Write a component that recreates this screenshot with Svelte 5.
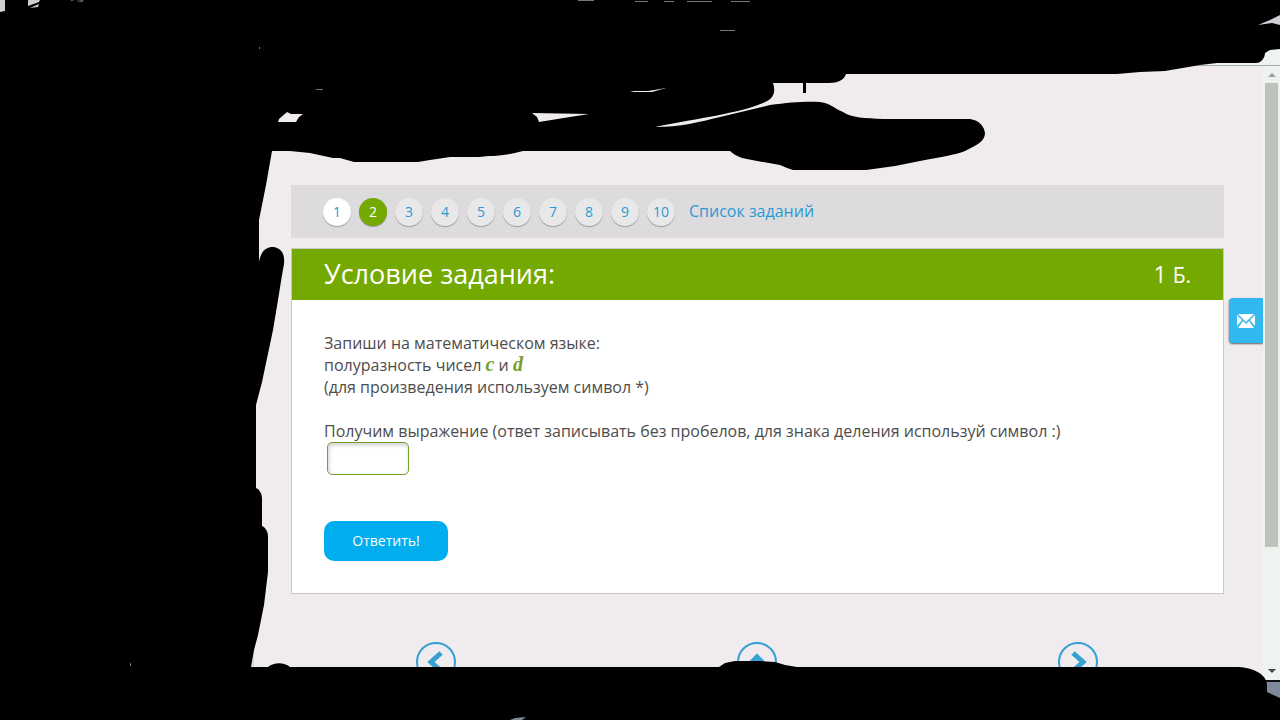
<script>
  const tasks = Array.from({ length: 10 }, (_, i) => i + 1);
  const current = 2;

  let answer = $state('');

  function submit(event) {
    event.preventDefault();
  }
</script>

<div class="window">
  <div class="toolbar"></div>

  <div class="viewport">
    <div class="page">
      <div class="sidebar"></div>

      <main>
        <nav class="tasks">
          {#each tasks as task (task)}
            <a
              href="#task-{task}"
              class="num"
              class:done={task < current}
              class:active={task === current}
            >{task}</a>
          {/each}
          <a href="#list" class="list">Список заданий</a>
        </nav>

        <section class="card">
          <header>
            <h1>Условие задания:</h1>
            <div class="points">1 <span>Б.</span></div>
          </header>

          <form onsubmit={submit}>
            <p>
              Запиши на математическом языке:<br />
              полуразность чисел <i>c</i> и <i>d</i><br />
              (для произведения используем символ *)
            </p>
            <label for="answer">
              Получим выражение (ответ записывать без пробелов, для знака деления используй символ :)
            </label>
            <input id="answer" type="text" autocomplete="off" bind:value={answer} />
            <button type="submit">Ответить!</button>
          </form>
        </section>

        <nav class="pager">
          <a href="#prev" aria-label="Назад">
            <svg viewBox="0 0 40 40">
              <circle cx="20" cy="20" r="19" />
              <path d="M25 11 L15 20 L25 29" />
            </svg>
          </a>
          <a href="#top" aria-label="Наверх">
            <svg viewBox="0 0 40 40">
              <circle cx="20" cy="20" r="19" />
              <path d="M11 24 L20 15 L29 24" />
            </svg>
          </a>
          <a href="#next" aria-label="Вперёд">
            <svg viewBox="0 0 40 40">
              <circle cx="20" cy="20" r="19" />
              <path d="M15 11 L25 20 L15 29" />
            </svg>
          </a>
        </nav>
      </main>

      <button class="feedback" type="button" aria-label="Написать нам">
        <svg viewBox="0 0 18 14">
          <path d="M1 0 H17 L9 8 Z M0 1 L5 6 L0 12 Z M18 1 L13 6 L18 12 Z M1 14 L6 7 L9 10 L12 7 L17 14 Z" />
        </svg>
      </button>
    </div>

    <div class="scrollbar">
      <svg class="up" viewBox="0 0 8 4"><path d="M0 4 L4 0 L8 4 Z" /></svg>
      <div class="track"><div class="thumb"></div></div>
      <svg class="down" viewBox="0 0 8 4"><path d="M0 0 H8 L4 4 Z" /></svg>
    </div>
  </div>

  <div class="taskbar"></div>

  <!-- black marker strokes, gaps between them cut out with evenodd -->
  <svg class="marker" viewBox="0 0 1280 720" preserveAspectRatio="none" aria-hidden="true">
    <path
      fill-rule="evenodd"
      d="M0 0 H1280 V49 L1270 50 L1265 53 C1265 58 1261 63 1256 63 H1217 L1200 65 L1165 71 L1140 72
        L1117 74 H846 C844 80 838 83 829 83 H806 V93 H803 V83 H773 C776 92 774 99 763 103
        C740 113 700 118 655 127 C680 127 700 122 720 117 L770 105 C790 102 808 101 820 102
        C832 104 833 108 843 112 C852 118 864 118 884 119 H970 C979 120 985 127 985 134
        C984 143 974 146 965 151 C955 155 940 157 925 160 L895 166 L866 170 H793 L787 168
        L780 165 L757 161 L742 158 C737 156 733 154 730 151 H523 C500 157 492 155 478 157
        H450 L430 160 L418 162 H354 L340 158 L333 158 L310 153 L290 151 H272
        L266 185 L262 205 L259 220 V262 C261 251 266 247 273 247 C281 248 285 253 284 264
        L282 275 L278 300 L273 330 L262 382 L256 405 V488 C260 490 262 494 262 499 V526
        C266 528 268 532 268 537 V572 L264 605 L258 635 L254 650 L251 667 H268
        C274 662 284 662 290 667 H719 L725 663 L735 661 H760 L775 662 L785 665 L797 667
        H1236 C1252 667 1267 674 1267 685 V692 L1280 698 V720 H0 Z
        M0 0 H5 V11 L0 12 Z
        M28 0 H40 L39 2 L28 6 Z M30 8 L39 4 L38 7 Z
        M278 122 L279 119 L287 112 L291 114 H303 L299 117 L296 122 Z
        M532 113 L589 114 L570 117 L539 122 L537 117 Z
        M630 91 H648 L666 88 L652 92 L634 92 Z
        M1258 25 L1270 20 L1280 15 V25 L1272 23 Z
        M510 720 L515 718 L526 717 L522 720 Z"
    />
    <path
      class="specks"
      d="M70 0 L74 0 L72 1 Z M76 1 L84 0 L82 2 Z
        M578 0 H594 V1 H578 Z M635 1 H648 V2 H635 Z M664 1 H674 V2 H664 Z
        M687 1 H712 V2 H687 Z M731 1 H750 V2 H731 Z
        M720 30 H735 V31 H720 Z M316 89 H323 V90 H316 Z
        M259 47 H260 V49 H259 Z M130 666 V664 L131 662 V666 Z"
    />
  </svg>
</div>

<style>
  :global(body) {
    margin: 0;
    font-family: 'Open Sans', sans-serif;
    color: #4d4d4d;
  }

  .window {
    position: relative;
    display: flex;
    flex-direction: column;
    height: 100vh;
    overflow: hidden;
  }

  .toolbar {
    flex: none;
    height: 65px;
    background: linear-gradient(#cfcfd3 30px, #f0f4f1 30px);
    border-bottom: 1px solid #a9adaa;
  }

  .viewport {
    flex: 1;
    display: flex;
    min-height: 0;
  }

  .page {
    position: relative;
    flex: 1;
    display: flex;
    overflow: hidden;
    background: #efebee;
  }

  .sidebar {
    flex: none;
    width: 251px;
    background: #f4f2f4;
    border-right: 3px solid #dcdadc;
  }

  main {
    flex: 1;
    padding: 119px 39px 0 37px;
  }

  a {
    color: #2a9ad6;
    text-decoration: none;
  }

  .tasks {
    display: flex;
    align-items: center;
    gap: 8px;
    height: 53px;
    padding: 0 32px;
    background: #dddbde;
  }

  .num {
    width: 28px;
    height: 28px;
    border-radius: 50%;
    background: #e8e8e8;
    box-shadow: 0 1px 1px rgba(0, 0, 0, 0.3);
    font-size: 14px;
    line-height: 28px;
    text-align: center;
  }

  .done {
    background: #fff;
  }

  .active {
    background: #73a900;
    color: #fff;
  }

  .list {
    margin-left: 6px;
    padding-bottom: 2px;
    font-size: 16px;
    line-height: 22px;
  }

  .card {
    margin-top: 10px;
    border: 1px solid #c8c8cb;
    background: #fff;
  }

  header {
    display: flex;
    align-items: center;
    justify-content: space-between;
    box-sizing: border-box;
    height: 51px;
    padding: 0 32px 2px;
    background: #73a900;
    color: #fff;
  }

  h1 {
    margin: 0;
    font-size: 27px;
    font-weight: 400;
  }

  .points {
    font-size: 23px;
  }

  .points span {
    font-size: 21px;
  }

  form {
    padding: 32px;
    font-size: 16px;
    line-height: 22px;
  }

  p {
    margin: 0 0 22px;
  }

  i {
    font-family: 'Liberation Serif', serif;
    font-size: 20px;
    font-weight: 700;
    line-height: 20px;
    color: #73a02c;
  }

  label {
    display: block;
  }

  input {
    display: block;
    box-sizing: border-box;
    width: 82px;
    height: 33px;
    margin: 0 3px 46px;
    padding: 0 8px;
    border: 1px solid #73a02c;
    border-radius: 5px;
    background: #fff;
    box-shadow: inset 1px 2px 4px rgba(0, 0, 0, 0.2);
    font: inherit;
  }

  form button {
    display: block;
    width: 124px;
    height: 40px;
    padding: 0 0 2px;
    border: 0;
    border-radius: 10px;
    background: #00aeef;
    color: #fff;
    font-family: inherit;
    font-size: 14px;
  }

  .pager {
    display: grid;
    grid-template-columns: repeat(3, 1fr);
    justify-items: center;
    margin: 48px -14px 0 -16px;
  }

  .pager a,
  .pager svg {
    display: block;
    width: 40px;
    height: 40px;
  }

  .pager svg {
    fill: none;
    stroke: #35a0d2;
  }

  .pager circle {
    stroke-width: 2;
  }

  .pager path {
    stroke-width: 5;
  }

  .feedback {
    position: absolute;
    top: 232px;
    right: 0;
    display: grid;
    place-items: center;
    width: 34px;
    height: 45px;
    padding: 0;
    border: 0;
    border-radius: 4px 0 0 4px;
    background: #31b8ee;
    box-shadow: 0 1px 2px rgba(0, 0, 0, 0.6);
  }

  .feedback svg {
    width: 18px;
    height: 14px;
    fill: #fff;
  }

  .scrollbar {
    flex: none;
    display: flex;
    flex-direction: column;
    align-items: center;
    width: 17px;
    background: #edf3ef;
  }

  .scrollbar svg {
    width: 8px;
    height: 4px;
  }

  .up {
    margin: 7px 0 6px;
    fill: #9a9f9b;
  }

  .down {
    margin: 6px 0 7px;
    fill: #444;
  }

  .track {
    flex: 1;
    width: 13px;
  }

  .thumb {
    height: 80%;
    background: #bcc3bc;
  }

  .taskbar {
    flex: none;
    height: 38px;
    border-top: 2px solid #111;
    background: #7f8a9b;
  }

  .marker {
    position: absolute;
    inset: 0;
    width: 100%;
    height: 100%;
    pointer-events: none;
  }

  .specks {
    fill: #777;
  }
</style>
